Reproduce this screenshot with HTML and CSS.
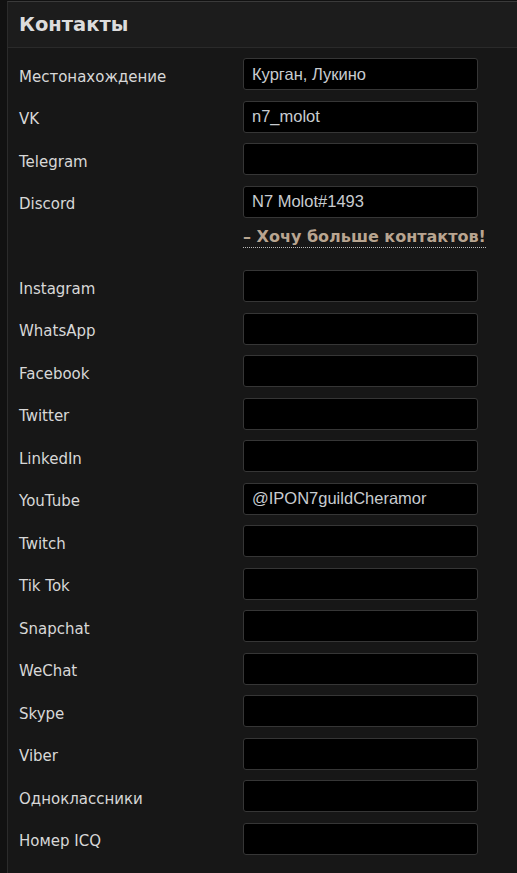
FILE: index.html
```html
<!DOCTYPE html>
<html lang="ru">
<head>
  <meta charset="UTF-8">
  <title>Контакты</title>
  <link rel="stylesheet" href="styles.css">
</head>
<body>

  <div class="panel">
    <h3 class="panel-title">Контакты</h3>

    <div class="panel-body">
      <div class="field">
        <label>Местонахождение</label>
        <input type="text" value="Курган, Лукино">
      </div>
      <div class="field">
        <label>VK</label>
        <input type="text" value="n7_molot">
      </div>
      <div class="field">
        <label>Telegram</label>
        <input type="text" value="">
      </div>
      <div class="field">
        <label>Discord</label>
        <input type="text" value="N7 Molot#1493">
      </div>

      <!-- extra contacts toggle -->
      <div class="more-row">
        <a href="#" class="more-link">– Хочу больше контактов!</a>
      </div>

      <div class="field">
        <label>Instagram</label>
        <input type="text" value="">
      </div>
      <div class="field">
        <label>WhatsApp</label>
        <input type="text" value="">
      </div>
      <div class="field">
        <label>Facebook</label>
        <input type="text" value="">
      </div>
      <div class="field">
        <label>Twitter</label>
        <input type="text" value="">
      </div>
      <div class="field">
        <label>LinkedIn</label>
        <input type="text" value="">
      </div>
      <div class="field">
        <label>YouTube</label>
        <input type="text" value="@IPON7guildCheramor">
      </div>
      <div class="field">
        <label>Twitch</label>
        <input type="text" value="">
      </div>
      <div class="field">
        <label>Tik Tok</label>
        <input type="text" value="">
      </div>
      <div class="field">
        <label>Snapchat</label>
        <input type="text" value="">
      </div>
      <div class="field">
        <label>WeChat</label>
        <input type="text" value="">
      </div>
      <div class="field">
        <label>Skype</label>
        <input type="text" value="">
      </div>
      <div class="field">
        <label>Viber</label>
        <input type="text" value="">
      </div>
      <div class="field">
        <label>Одноклассники</label>
        <input type="text" value="">
      </div>
      <div class="field">
        <label>Номер ICQ</label>
        <input type="text" value="">
      </div>
    </div>
  </div>

</body>
</html>
```

FILE: styles.css
```css
/* Page background */
html, body {
  margin: 0;
  padding: 0;
  background: #111111;
  font-family: "DejaVu Sans", Verdana, sans-serif;
  color: #d6d6d6;
}

body {
  padding-left: 7px;
  padding-top: 1px;
}

/* Panel box */
.panel {
  background: #171717;
  border-left: 1px solid #2b2b2b;
  border-top: 1px solid #3a3a3a;
  min-height: 872px;
}

.panel-title {
  margin: 0;
  height: 45px;
  line-height: 46px;
  padding-left: 11px;
  background: #1c1c1c;
  border-bottom: 1px solid #2a2a2a;
  font-size: 19.5px;
  font-weight: bold;
  color: #dcdcdc;
}

.panel-body {
  padding: 10px 0 0 11px;
}

/******************************************************
 * Form rows
 ******************************************************/
.field {
  display: flex;
  align-items: center;
  height: 32px;
  margin-bottom: 10.5px;
}

.field label {
  width: 224px;
  font-size: 15px;
  padding-top: 5px;
  color: #d8d8d8;
}

.field input {
  box-sizing: border-box;
  width: 235px;
  height: 32px;
  margin: 0;
  padding: 0 8px;
  background: #000;
  border: 1px solid #363636;
  border-radius: 3px;
  font-family: "Liberation Sans", Arial, sans-serif;
  font-size: 16.5px;
  color: #c8ccd0;
  outline: none;
}

/* "more contacts" link */
.more-row {
  padding-left: 224px;
  height: 43px;
  margin-top: -1px;
}

.more-link {
  display: inline-block;
  font-size: 16px;
  font-weight: bold;
  color: #b9a590;
  text-decoration: none;
  border-bottom: 1px dotted #bbbbbb;
  line-height: 20px;
}
```
